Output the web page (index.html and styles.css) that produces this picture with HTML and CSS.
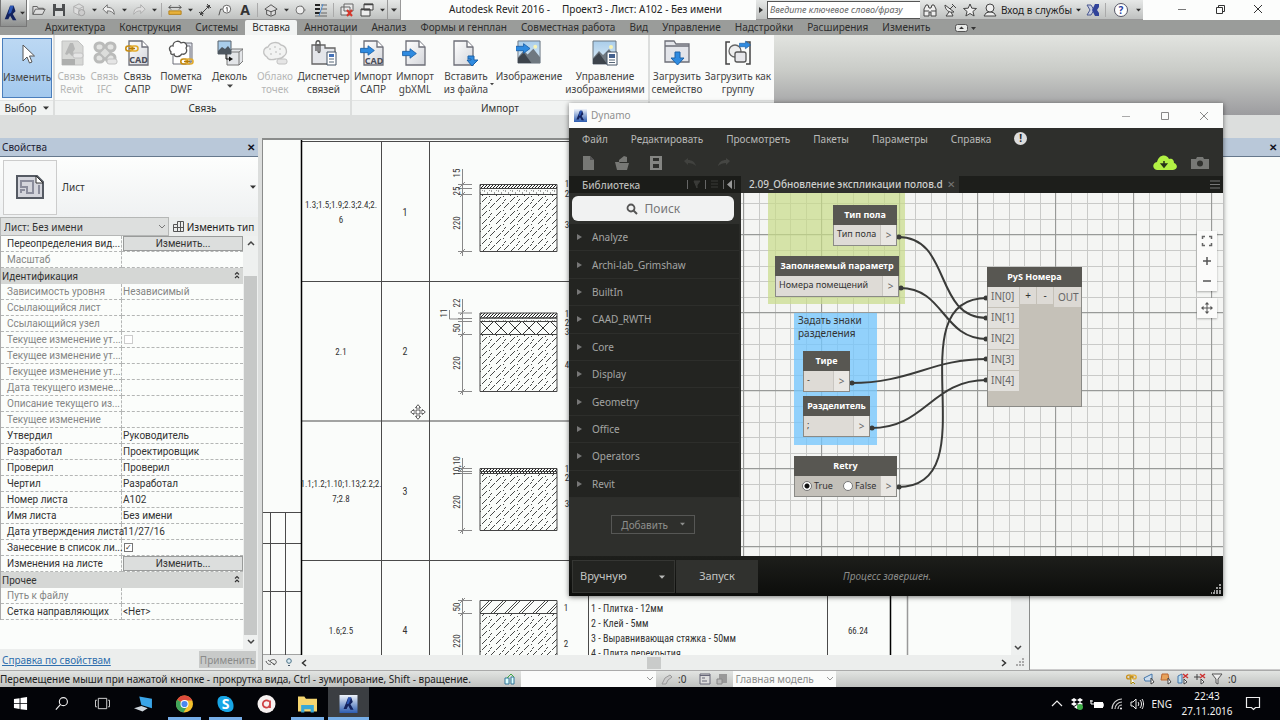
FILE: index.html
```html
<!DOCTYPE html>
<html lang="ru">
<head>
<meta charset="utf-8">
<title>Autodesk Revit 2016 - Проект3 - Лист: A102 - Без имени</title>
<link rel="stylesheet" href="styles.css">
</head>
<body>
<svg class="defs" aria-hidden="true">
  <defs>
    <linearGradient id="pageFill" x1="0" y1="0" x2="1" y2="1"><stop offset="0" stop-color="#fff"/><stop offset="1" stop-color="#d3d5da"/></linearGradient>
    <linearGradient id="skyFill" x1="0" y1="0" x2="0" y2="1"><stop offset="0" stop-color="#a9cdea"/><stop offset="1" stop-color="#dfeef8"/></linearGradient>
    <linearGradient id="revitFill" x1="0" y1="0" x2="0" y2="1"><stop offset="0" stop-color="#eef3fa"/><stop offset="1" stop-color="#2c5cb0"/></linearGradient>
    <symbol id="page" viewBox="0 0 26 26"><path d="M4 1h13l6 6v18H4z" fill="url(#pageFill)" stroke="#6d6f78" stroke-width="1.3"/><path d="M17 1v6h6" fill="#fff" stroke="#6d6f78" stroke-width="1.3"/></symbol>
    <symbol id="chain" viewBox="0 0 14 7"><rect x=".8" y="1" width="7" height="5" rx="2.5" fill="none" stroke="#c98d10" stroke-width="1.6"/><rect x="6" y="1" width="7" height="5" rx="2.5" fill="none" stroke="#e3ab2c" stroke-width="1.6"/><path d="M4 3.5h6" stroke="#b37a08" stroke-width="1.4"/></symbol>
    <symbol id="arrowR" viewBox="0 0 14 10"><path d="M.5 3h7V.6L13.400 5l-5.900 4.400V7h-7z" fill="#2f8be0" stroke="#1c62a8" stroke-width=".8"/></symbol>
    <symbol id="caret" viewBox="0 0 6 4"><path d="M0 .5h6L3 3.700z" fill="currentColor"/></symbol>
    <symbol id="fold" viewBox="0 0 6 8"><path d="M1 3.500l2-2 2 2M1 7l2-2 2 2" fill="none" stroke="#333" stroke-width="1.100"/></symbol>
    <symbol id="move" viewBox="0 0 16 16"><path d="M8 2v12M2 8h12" stroke="currentColor" stroke-width="1.300"/><path d="M8 0l3 3.400H5zM8 16l3-3.400H5zM0 8l3.400-3v6zM16 8l-3.400-3v6z" fill="currentColor"/></symbol>
    <symbol id="aMark" viewBox="0 0 20 20"><path d="M3 17L9 2h4l2 6-3 3 4 7h-4l-3-5-2 4z" fill="#13235f"/><path d="M9 2l4 0-3 8-3 1z" fill="#2c57b5"/></symbol>
    <symbol id="picture" viewBox="0 0 26 26"><path d="M1 1h23v23H1z" fill="url(#skyFill)" stroke="#6b7681"/><path d="M1 18l6-7 4 4 6-6 7 9v6H1z" fill="#6f7880"/><path d="M1 19l6-6 8 11H1z" fill="#3d444c"/><circle cx="19" cy="7" r="2" fill="#f7f4b5"/></symbol>
  </defs>
</svg>

<div class="revit">
  <header class="titlebar">
    <button class="logo" aria-label="Меню приложения"><svg width="18" height="20"><use href="#aMark"/></svg><svg class="caret"><use href="#caret"/></svg></button>
    <div class="qat">
      <button aria-label="Открыть"><svg viewBox="0 0 16 14"><path d="M1 12V3h5l1 2h6v2M1 12l3-6h11l-3 6z" fill="#ddd" stroke="#555"/></svg></button>
      <button aria-label="Сохранить"><svg viewBox="0 0 14 14"><path d="M1 1h12v12H1z" fill="#4c4e50"/><path d="M4 1h6v4H4zM3 8h8v5H3z" fill="#d8dada"/></svg></button>
      <button aria-label="Синхронизация"><svg viewBox="0 0 16 16"><path d="M2 4l6-3 5 3v6l-5 4-6-3zM2 4l6 3 5-3M8 7v7" fill="#ddd" stroke="#aaa"/><circle cx="11" cy="11" r="3.500" fill="#ccc" stroke="#999"/></svg></button>
      <i class="drop"><svg class="caret"><use href="#caret"/></svg></i>
      <button aria-label="Отменить"><svg viewBox="0 0 16 14"><path d="M1 6l5-5v3c5 0 8 2 8 8-2-3-4-4-8-4v3z" fill="#eee" stroke="#666"/></svg></button>
      <i class="drop"><svg class="caret"><use href="#caret"/></svg></i>
      <button aria-label="Повторить"><svg viewBox="0 0 16 14"><path d="M15 6l-5-5v3c-5 0-8 2-8 8 2-3 4-4 8-4v3z" fill="#ddd" stroke="#aaa"/></svg></button>
      <i class="drop"><svg class="caret"><use href="#caret"/></svg></i>
      <i class="sep"></i>
      <button aria-label="Измерить"><svg viewBox="0 0 16 14"><path d="M1 4h14M3.500 1.500L1 4l2.500 2.500M12.500 1.500L15 4l-2.500 2.500" fill="none" stroke="#444"/><path d="M1 8h14v4H1z" fill="#e7b13c" stroke="#b07d14"/></svg></button>
      <i class="drop"><svg class="caret"><use href="#caret"/></svg></i>
      <button aria-label="Размер"><svg viewBox="0 0 14 14"><path d="M2 12L12 2M1 9l4 4M9 1l4 4" stroke="#444"/><path d="M2 12l1-4 3 3zM12 2l-1 4-3-3z" fill="#444"/></svg></button>
      <button aria-label="Марка"><svg viewBox="0 0 16 14"><circle cx="10" cy="6" r="4.500" fill="#fff" stroke="#555"/><path d="M5 6H3L1 13M9 5l1.500-1v5" fill="none" stroke="#444"/></svg></button>
      <button class="letter" aria-label="Текст">A</button>
      <i class="sep"></i>
      <button aria-label="3D вид"><svg viewBox="0 0 16 14"><path d="M1 6l7-5 7 5-2 1v5l-5 2-5-2V7z" fill="#ddd" stroke="#444"/><path d="M3 7l5 2 5-2M8 9v4" fill="none" stroke="#444"/></svg></button>
      <i class="drop"><svg class="caret"><use href="#caret"/></svg></i>
      <button aria-label="Разрез"><svg viewBox="0 0 14 14"><path d="M7 2l5 5-5 5z" fill="#999"/><circle cx="6" cy="7" r="4" fill="#eee" stroke="#777"/></svg></button>
      <button aria-label="Тонкие линии"><svg viewBox="0 0 14 14"><path d="M1 2h5M1 6h5M1 10h5" stroke="#222" stroke-width="2"/><path d="M7 2h6M7 6h6M7 10h6M1 13h12" stroke="#666"/><path d="M9 1L5 13" stroke="#4e8bd0"/></svg></button>
      <i class="sep"></i>
      <button aria-label="Закрыть скрытые"><svg viewBox="0 0 14 14"><path d="M4 1h9v7H4zM1 4h9v8H1z" fill="#e8e8e8" stroke="#666"/><path d="M7 7l5 6M12 7l-5 6" stroke="#d5372c" stroke-width="2"/></svg></button>
      <button aria-label="Переключение окон"><svg viewBox="0 0 14 14"><path d="M4 1h9v6H4zM1 6h9v7H1z" fill="#eee" stroke="#444"/><path d="M4 1.500h9M1 6.500h9" stroke="#444" stroke-width="1.500"/></svg></button>
      <i class="drop"><svg class="caret"><use href="#caret"/></svg></i>
      <i class="more"><svg class="caret"><use href="#caret"/></svg></i>
    </div>
    <h1><span>Autodesk Revit 2016 -</span><span>Проект3 - Лист: A102 - Без имени</span></h1>
    <div class="info">
      <button class="nudge" aria-label="Развернуть"><svg viewBox="0 0 4 6"><path d="M0 0l4 3-4 3z" fill="#333"/></svg></button>
      <input type="text" placeholder="Введите ключевое слово/фразу" aria-label="Поиск по справке">
      <button aria-label="Поиск"><svg viewBox="0 0 14 14"><path d="M1 13V6l2-4h2l1 3h2l1-3h2l2 4v7H8V9H6v4zM1 8h5M8 8h5" fill="#eee" stroke="#444"/></svg></button>
      <button aria-label="Центр связи"><svg viewBox="0 0 14 14"><path d="M2 2c0 5 4 8 9 7zM6 9l-3 4h7L8 9M7 6l4-4M9 1l4 4" fill="#eee" stroke="#444"/></svg></button>
      <button aria-label="Избранное"><svg viewBox="0 0 14 14"><path d="M7 1l1.800 4.200 4.700.3-3.600 3 1.200 4.500L7 10.500 2.900 13l1.200-4.500-3.600-3 4.700-.3z" fill="#eee" stroke="#444"/></svg></button>
      <button class="signin"><svg viewBox="0 0 14 14"><path d="M1 13h12l-2-3-3-1h-2l-3 1z" fill="#eee" stroke="#444"/><circle cx="7" cy="5" r="4" fill="#eee" stroke="#444"/></svg>Вход в службы<svg class="caret"><use href="#caret"/></svg></button>
      <button aria-label="Exchange Apps"><svg viewBox="0 0 14 14"><path d="M1 2h4l3 5-3 5H1l3-5z" fill="#c5cbe0" stroke="#4a5890"/><path d="M13 1v3l-2 3 2 3v3H9L6 7l3-6z" fill="#31439a"/></svg></button>
      <i class="sep"></i>
      <button class="help" aria-label="Справка">?</button>
      <i class="drop"><svg class="caret"><use href="#caret"/></svg></i>
    </div>
    <div class="winbtns">
      <button aria-label="Свернуть"><svg viewBox="0 0 10 10"><path d="M1 5.500h8" stroke="#777"/></svg></button>
      <button aria-label="Восстановить"><svg viewBox="0 0 10 10"><path d="M1.500 3.500h6v6h-6zM3.500 3V1.500h6v6H8" fill="none" stroke="#333"/></svg></button>
      <button aria-label="Закрыть"><svg viewBox="0 0 10 10"><path d="M1 1l8 8M9 1L1 9" stroke="#333"/></svg></button>
    </div>
  </header>

  <nav class="tabs">
    <button>Архитектура</button><button>Конструкция</button><button>Системы</button><button class="on">Вставка</button><button>Аннотации</button><button>Анализ</button><button>Формы и генплан</button><button>Совместная работа</button><button>Вид</button><button>Управление</button><button>Надстройки</button><button>Расширения</button><button>Изменить</button>
    <button class="collapse" aria-label="Свернуть ленту"><svg width="22" height="8" viewBox="0 0 22 8"><rect x=".5" y=".5" width="12" height="7" rx="2" fill="#e8eae8" stroke="#555"/><path d="M4 5h5L6.500 2.500zM16 3h5l-2.500 3z" fill="#333"/></svg></button>
  </nav>

  <div class="ribbon">
    <section class="group g-select">
      <div class="tools">
        <button class="tool active"><svg viewBox="0 0 26 26"><path d="M9 4v16l4-4 2.500 6 2.500-1-2.500-6h5z" fill="#fff" stroke="#555"/></svg><span>Изменить</span></button>
      </div>
      <h2>Выбор <svg class="caret"><use href="#caret"/></svg></h2>
    </section>
    <section class="group g-link">
      <div class="tools">
        <button class="tool off"><svg viewBox="0 0 26 26"><path d="M3 1h16l5 5v19H3z" fill="#c9cac8" stroke="#aaa"/><path d="M6 14l5-11h3l2 6-2 3 3 4h-4l-3-3-2 2z" fill="#999"/><path d="M3 19h13v6H3z" fill="#8f908e"/><rect x="14" y="13" width="10" height="5" rx="2" fill="#ddd" stroke="#aaa"/></svg><span>Связь<br>Revit</span></button>
        <button class="tool off"><svg viewBox="0 0 26 26"><g fill="#d8d9d7" stroke="#a0a19f" stroke-width="3"><rect x="3" y="3" width="9" height="8" rx="4"/><rect x="14" y="3" width="9" height="8" rx="4"/><rect x="3" y="14" width="9" height="8" rx="4"/><rect x="14" y="14" width="9" height="8" rx="4"/></g><path d="M13 7l6 6-6 6-6-6z" fill="#d0d1cf" stroke="#a0a19f" stroke-width="2"/><rect x="15" y="19" width="10" height="5" rx="2" fill="#ddd" stroke="#aaa"/></svg><span>Связь<br>IFC</span></button>
        <button class="tool"><svg viewBox="0 0 26 26"><use href="#page" width="26" height="26"/><use href="#chain" x="0" y="5" width="14" height="7"/><text class="cad" x="13.500" y="23">CAD</text></svg><span>Связь<br>САПР</span></button>
        <button class="tool"><svg viewBox="0 0 26 26"><path d="M7 3h17v19H7z" fill="#dfe2ea" stroke="#6d6f78"/><path d="M5 6h17v18H5z" fill="#fff" stroke="#6d6f78"/><path d="M3 12c-3-3-1-7 2-6 0-5 6-6 8-3 4-2 7 2 5 5 2 4-1 7-4 6-3 4-8 3-8 0-2 1-4 0-3-2z" fill="#fff" stroke="#555" stroke-width="1.300"/><use href="#chain" x="12" y="18" width="14" height="7"/></svg><span>Пометка<br>DWF</span></button>
        <button class="tool"><svg viewBox="0 0 26 26"><path d="M10 12l5-3h11v12l-4 4H10z" fill="#e3e5e8" stroke="#777"/><path d="M10 12h12l4-3M22 12v13" fill="none" stroke="#777"/><path d="M1 1h13v13H1z" fill="#a9cdea" stroke="#57616b"/><path d="M1 11l4-4 3 2 3-3 3 4v4H1z" fill="#4d565f"/><path d="M9 14v5h4" fill="none" stroke="#111"/><path d="M12 16.500l4 2.500-4 2.500z" fill="#111"/></svg><span>Деколь</span><svg class="caret"><use href="#caret"/></svg></button>
        <button class="tool off"><svg viewBox="0 0 26 26"><path d="M5 17c-5-3-4-9 1-10 2-5 10-6 13-2 6 1 7 8 3 11-3 4-6 2-8 3-4 1-8 1-9-2z" fill="#f0f0ef" stroke="#aaa" stroke-width="1.300"/><g fill="#bbb"><circle cx="8" cy="9" r="1"/><circle cx="13" cy="7" r="1"/><circle cx="18" cy="9" r="1"/><circle cx="9" cy="14" r="1"/><circle cx="14" cy="12" r="1"/><circle cx="18" cy="14" r="1"/></g><rect x="15" y="19" width="10" height="5" rx="2" fill="#ddd" stroke="#aaa"/></svg><span>Облако<br>точек</span></button>
        <button class="tool"><svg viewBox="0 0 26 26"><path d="M1 5h13v3h10v16H1z" fill="#e4e6ea" stroke="#666" stroke-width="1.300"/><path d="M5 11V3c0-3 4-3 4 0v8c0 2-2 2-2 0V4" fill="none" stroke="#555" stroke-width="1.300"/><path d="M16 12h9v13h-9z" fill="#fff" stroke="#456"/><path d="M18 14h5v3h-5z" fill="#4472b8"/><path d="M18 19h5M18 22h5" stroke="#567"/></svg><span>Диспетчер<br>связей</span></button>
      </div>
      <h2>Связь</h2>
    </section>
    <section class="group g-import">
      <div class="tools">
        <button class="tool"><svg viewBox="0 0 26 26"><use href="#page" width="26" height="26"/><use href="#arrowR" x="0" y="5" width="15" height="11"/><text class="cad" x="14" y="24">CAD</text></svg><span>Импорт<br>САПР</span></button>
        <button class="tool"><svg viewBox="0 0 26 26"><use href="#page" width="26" height="26"/><use href="#arrowR" x="0" y="8" width="15" height="11"/></svg><span>Импорт<br>gbXML</span></button>
        <button class="tool"><svg viewBox="0 0 26 26"><use href="#page" x="-3" width="26" height="26"/><path d="M15 16h6v4h4l-6 6-5-6h4v-1h-3z" fill="#2f8be0" stroke="#1c62a8"/></svg><span>Вставить<br>из файла</span><svg class="caret side"><use href="#caret"/></svg></button>
        <button class="tool"><svg viewBox="0 0 26 26"><use href="#picture" x="1" width="25" height="25"/><use href="#arrowR" x="-1" y="3" width="16" height="11"/></svg><span>Изображение</span></button>
        <button class="tool"><svg viewBox="0 0 26 26"><use href="#picture" width="26" height="26"/><path d="M15 12h10v13H15z" fill="#fff" stroke="#456"/><path d="M17 14h6v4h-6z" fill="#44618e"/><path d="M17 20h6M17 22.500h6" stroke="#567"/></svg><span>Управление<br>изображениями</span></button>
      </div>
      <h2>Импорт</h2>
    </section>
    <section class="group g-load">
      <div class="tools">
        <button class="tool"><svg viewBox="0 0 26 26"><path d="M1 4V1h9l2 3h13v18H1zM1 6h24" fill="#e3e5ea" stroke="#6d6f78" stroke-width="1.300"/><path d="M11 12h5v6h4l-6.500 7L7 18h4z" fill="#2f8be0" stroke="#1c62a8"/></svg><span>Загрузить<br>семейство</span></button>
        <button class="tool"><svg viewBox="0 0 26 26"><path d="M5 2H1v22h4M21 2h4v22h-4" fill="none" stroke="#444" stroke-width="1.500"/><circle cx="10" cy="11" r="6" fill="#eee" stroke="#666" stroke-width="1.300"/><rect x="10" y="12" width="11" height="10" rx="2" fill="#e6e6ea" stroke="#555" stroke-width="1.300"/><use href="#arrowR" x="14" y="0" width="12" height="10"/></svg><span>Загрузить как<br>группу</span></button>
      </div>
      <h2></h2>
    </section>
  </div>
  <div class="options"></div>

  <main class="workspace">
    <aside class="props">
      <header><h3>Свойства</h3><button aria-label="Закрыть">✕</button></header>
      <div class="type">
        <div class="thumb"><svg width="28" height="24" viewBox="0 0 28 24"><path d="M1 1h20l6 6v16H1z" fill="#d4d5dc" stroke="#555a63" stroke-width="2"/><path d="M5 6h12v12h-6v-6H5zM5 18v-3h4M23 10v9" fill="none" stroke="#8b8d9c" stroke-width="2"/><path d="M20 1v7h7z" fill="#fff" stroke="#333"/></svg></div>
        <span>Лист</span>
        <svg class="caret"><use href="#caret"/></svg>
      </div>
      <div class="filter">
        <select aria-label="Категория"><option>Лист: Без имени</option></select>
        <button><svg width="11" height="11" viewBox="0 0 11 11"><path d="M.5 3.500h4v-3h6v10h-10zM.5 6.500h10M4.500 3.500v7M7.500.5v10" fill="none" stroke="#555"/></svg>Изменить тип</button>
      </div>
      <div class="grid">
        <div class="rows">
        <table>
          <tbody>
            <tr><th>Переопределения вид...</th><td class="b"><button>Изменить...</button></td></tr>
            <tr class="dim"><th>Масштаб</th><td></td></tr>
            <tr class="head"><th colspan="2">Идентификация<svg><use href="#fold"/></svg></th></tr>
            <tr class="dim"><th>Зависимость уровня</th><td>Независимый</td></tr>
            <tr class="dim"><th>Ссылающийся лист</th><td></td></tr>
            <tr class="dim"><th>Ссылающийся узел</th><td></td></tr>
            <tr class="dim"><th>Текущее изменение ут...</th><td><input type="checkbox" disabled aria-label="Текущее изменение"></td></tr>
            <tr class="dim"><th>Текущее изменение ут...</th><td></td></tr>
            <tr class="dim"><th>Текущее изменение ут...</th><td></td></tr>
            <tr class="dim"><th>Дата текущего измене...</th><td></td></tr>
            <tr class="dim"><th>Описание текущего из...</th><td></td></tr>
            <tr class="dim"><th>Текущее изменение</th><td></td></tr>
            <tr><th>Утвердил</th><td>Руководитель</td></tr>
            <tr><th>Разработал</th><td>Проектировщик</td></tr>
            <tr><th>Проверил</th><td>Проверил</td></tr>
            <tr><th>Чертил</th><td>Разработал</td></tr>
            <tr><th>Номер листа</th><td>A102</td></tr>
            <tr><th>Имя листа</th><td>Без имени</td></tr>
            <tr><th>Дата утверждения листа</th><td>11/27/16</td></tr>
            <tr><th>Занесение в список ли...</th><td><input type="checkbox" checked aria-label="Занесение в список листов"></td></tr>
            <tr><th>Изменения на листе</th><td class="b"><button>Изменить...</button></td></tr>
            <tr class="head"><th colspan="2">Прочее<svg><use href="#fold"/></svg></th></tr>
            <tr class="dim"><th>Путь к файлу</th><td></td></tr>
            <tr><th>Сетка направляющих</th><td>&lt;Нет&gt;</td></tr>
          </tbody>
        </table>
        </div>
        <div class="vbar"><svg viewBox="0 0 8 6"><path d="M1 5l3-3 3 3" fill="none" stroke="#444" stroke-width="1.500"/></svg><i></i><svg viewBox="0 0 8 6"><path d="M1 1l3 3 3-3" fill="none" stroke="#444" stroke-width="1.500"/></svg></div>
      </div>
      <footer><a href="#">Справка по свойствам</a><button disabled>Применить</button></footer>
    </aside>

    <section class="view">
      <div class="sheetrow">
        <svg class="sheet" aria-label="Экспликация полов">
          <defs>
            <pattern id="hatch" width="14" height="14" patternUnits="userSpaceOnUse"><path d="M0 12l5-5M6 6l5-5M6 14l5-5M12 8l3-3M-1 6l3-3M13 1l2-2" stroke="#333" stroke-width=".9"/></pattern>
            <pattern id="dense" width="3" height="3" patternUnits="userSpaceOnUse"><path d="M0 3l3-3" stroke="#222" stroke-width="1"/></pattern>
            <pattern id="cross" width="14" height="14" patternUnits="userSpaceOnUse" patternTransform="translate(480 321)"><path d="M0 14L14 0M0 0l14 14" stroke="#333" stroke-width="1"/></pattern>
            <pattern id="wide" width="14" height="13" patternUnits="userSpaceOnUse" patternTransform="translate(480 600)"><path d="M0 13L13 0M-3 13L10 0M11 13L24 0" stroke="#333" stroke-width=".9"/></pattern>
            <pattern id="dots" width="7" height="5" patternUnits="userSpaceOnUse"><path d="M1 1h1M4 3h1M6 0h1" stroke="#444"/></pattern>
          </defs>
          <g transform="translate(-263 -140)">
            <g class="thin">
              <path d="M302 141.500H1000M302 281.500H900M302 421H900M302 560.500H900M381.500 141V660M429.500 141V660M588.500 560V660M827.500 590V660"/>
              <path d="M263 512.500h38M263 543.500h38M263 591.500h38M263 655h38M270.500 512v150M285.500 512v150"/>
            </g>
            <path class="thick" d="M301.500 139v520M890.500 139v520"/><path class="gray" d="M907.500 139v520"/>
            <g class="box">
              <path fill="url(#dense)" d="M480 184.500h77v4h-77z"/><path fill="url(#dots)" d="M480 188.500h77v6h-77z"/><path fill="url(#hatch)" d="M480 194.500h77v57h-77z"/>
              <path fill="url(#dense)" d="M480 313h77v5h-77z"/><path fill="url(#dots)" d="M480 318h77v3.500h-77z"/><path fill="url(#cross)" d="M480 321.500h77v13h-77z"/><path fill="url(#hatch)" d="M480 334.500h77v57h-77z"/>
              <path fill="url(#dense)" d="M480 468.500h77v3h-77z"/><path fill="url(#dense)" d="M480 471.500h77v2h-77z"/><path fill="url(#hatch)" d="M480 473.500h77v57h-77z"/>
              <path fill="url(#wide)" d="M480 600.500h77v13h-77z"/><path fill="url(#hatch)" d="M480 613.500h77v57h-77z"/>
            </g>
            <g class="dimline">
              <path d="M462.500 169v87M458 184.500h14M458 188.500h14M458 194.500h14M458 251.500h14M460 187l5-5M460 197l5-5M460 254l5-5"/>
              <path d="M462.500 299v96M458 313h14M458 318.500h14M458 321.500h14M458 334.500h14M458 391.500h14M449.500 310v9h13M460 315l5-5M460 337l5-5M460 394l5-5"/>
              <path d="M462.500 458v76M458 468.500h14M458 471.500h14M458 473.500h14M458 530.500h14M460 471l5-5M460 533l5-5"/>
              <path d="M462.500 598v70M458 600.500h14M458 613.500h14M460 603l5-5M460 616l5-5"/>
            </g>
            <g class="num">
              <text transform="translate(460 173) rotate(-90)">15</text><text transform="translate(460 191) rotate(-90)">25</text><text transform="translate(460 223) rotate(-90)">220</text>
              <text transform="translate(460 303) rotate(-90)">22</text><text transform="translate(447 313) rotate(-90)">11</text><text transform="translate(460 328) rotate(-90)">50</text><text transform="translate(460 363) rotate(-90)">220</text>
              <text transform="translate(460 466) rotate(-90)">10,10</text><text transform="translate(460 502) rotate(-90)">220</text>
              <text transform="translate(460 607) rotate(-90)">50</text><text transform="translate(460 641) rotate(-90)">220</text>
              <text x="567" y="187">1</text><text x="567" y="197">2</text><text x="567" y="228">3</text>
              <text x="567" y="317">1</text><text x="567" y="326">2</text><text x="567" y="335">3</text><text x="567" y="368">4</text>
              <text x="567" y="472">1</text><text x="567" y="481">2</text><text x="567" y="507">3</text>
              <text x="566" y="611">1</text><text x="566" y="647">2</text>
            </g>
            <g class="cell">
              <text x="341" y="208">1.3;1.5;1.9;2.3;2.4;2.</text><text x="341" y="223">6</text>
              <text x="341" y="355">2.1</text>
              <text x="341" y="487">1.1;1.2;1.10;1.13;2.2;2.</text><text x="341" y="502">7;2.8</text>
              <text x="341" y="634">1.6;2.5</text>
              <text x="858" y="634">66.24</text>
            </g>
            <g class="cell big"><text x="405" y="216">1</text><text x="405" y="355">2</text><text x="405" y="495">3</text><text x="405" y="634">4</text></g>
            <g class="desc">
              <text x="591" y="612">1 - Плитка - 12мм</text><text x="591" y="627">2 - Клей - 5мм</text><text x="591" y="642">3 - Выравнивающая стяжка - 50мм</text><text x="591" y="657">4 - Плита перекрытия</text>
            </g>
            <svg x="410" y="404" width="16" height="16" viewBox="0 0 16 16"><path d="M8 .7l2.500 3H9v3.300h3.300V5.500l3 2.500-3 2.500V9H9v3.300h1.500L8 15.300l-2.500-3H7V9H3.700v1.500L.7 8l3-2.500V7H7V3.700H5.500z" fill="#fff" stroke="#333" stroke-width=".8"/></svg>
          </g>
        </svg>
        <div class="sheetbar"><svg viewBox="0 0 8 6"><path d="M1 1l3 3 3-3" fill="none" stroke="#444" stroke-width="1.500"/></svg></div>
      </div>
      <div class="hbar">
        <svg width="12" height="9" viewBox="0 0 12 9"><path d="M1 3c1 3 3 4 5 3M3 2l7 5M5 3c2-2 5-2 6 0s-1 4-3 3" fill="none" stroke="#555"/></svg>
        <svg width="6" height="9" viewBox="0 0 6 9"><circle cx="3" cy="3" r="2.300" fill="#dcecf5" stroke="#4b7286"/><path d="M2 7.500h2" stroke="#456"/></svg>
        <svg width="6" height="8" viewBox="0 0 6 8"><path d="M5 1L1.500 4 5 7" fill="none" stroke="#333" stroke-width="1.500"/></svg>
        <div class="track"><i></i></div>
        <svg width="6" height="8" viewBox="0 0 6 8"><path d="M1 1l3.500 3L1 7" fill="none" stroke="#333" stroke-width="1.500"/></svg>
        <svg width="9" height="9" viewBox="0 0 9 9"><path d="M6 1h2M3 4h2M6 4h2M0 7h2M3 7h2M6 7h2" stroke="#aaa" stroke-width="2"/></svg>
      </div>
    </section>
    <aside class="browser"><header><button aria-label="Закрыть">✕</button></header></aside>
  </main>

  <footer class="status">
    <p>Перемещение мыши при нажатой кнопке - прокрутка вида, Ctrl - зумирование, Shift - вращение.</p>
    <div class="sets">
      <svg width="12" height="12" viewBox="0 0 12 12"><path d="M1 5h4v6H1zM7 4h3v7H7z" fill="#dff" stroke="#379"/><path d="M3 5l4-4 3 3" fill="none" stroke="#4a4"/></svg>
      <select aria-label="Рабочий набор"><option></option></select>
      <svg width="12" height="12" viewBox="0 0 12 12"><path d="M1 11l3-6 5-3 2 2-4 3-2 4z" fill="#ccc" stroke="#999"/></svg>
      <span>:0</span>
      <svg width="12" height="12" viewBox="0 0 12 12"><path d="M1 1h10v10H1z" fill="#ddd" stroke="#667"/><path d="M1 2.500h10M3 5h3M3 8h5" stroke="#667"/></svg>
      <svg width="12" height="12" viewBox="0 0 12 12"><path d="M3 1h8v9H3z" fill="#999"/><path d="M1 11V6h5v5z" fill="#bbb" stroke="#888"/></svg>
      <select class="model" aria-label="Вариант конструкции"><option>Главная модель</option></select>
    </div>
    <div class="picks">
      <svg viewBox="0 0 12 12"><use href="#chain" y="1" width="11" height="6"/><path d="M5 4v7l2-2 2 2" fill="#fff" stroke="#a80"/></svg>
      <svg viewBox="0 0 12 12"><path d="M1 5l8-4v7H2z" fill="#cde" stroke="#47a"/><path d="M8 5v6l3-2z" fill="#fff" stroke="#444"/></svg>
      <svg viewBox="0 0 12 12"><path d="M2 1h6l1 6H1z" fill="#e7a35c" stroke="#b63"/><path d="M8 5v6l3-2z" fill="#fff" stroke="#444"/></svg>
      <svg viewBox="0 0 12 12"><path d="M1 3l4-2v9H1z" fill="#bde" stroke="#47a"/><path d="M6 1l5 4M11 1L6 5" stroke="#c33" stroke-width="1.500"/><path d="M7 6v5l3-2z" fill="#fff" stroke="#444"/></svg>
      <svg viewBox="0 0 12 12"><path d="M0 4h6M3 1v6" stroke="#444"/><path d="M6 1l5 4M11 1L6 5" stroke="#c33" stroke-width="1.500"/><path d="M7 6v5l3-2z" fill="#fff" stroke="#444"/></svg>
      <svg viewBox="0 0 12 12"><path d="M1 1h10L7 6v5L5 10V6z" fill="#eee" stroke="#555"/></svg>
      <span>:0</span>
    </div>
  </footer>
</div>

<nav class="taskbar">
  <button aria-label="Пуск"><svg viewBox="0 0 16 16"><path d="M1 3.200l6-.9v5.300H1zM8 2.100l7-1.100v6.600H8zM1 8.500h6v5.300l-6-.9zM8 8.500h7V15l-7-1z" fill="#fff"/></svg></button>
  <button aria-label="Поиск"><svg viewBox="0 0 16 16"><circle cx="10" cy="6" r="4.300" fill="none" stroke="#eee" stroke-width="1.200"/><path d="M7 9l-5 5.500" stroke="#eee" stroke-width="1.200"/></svg></button>
  <button aria-label="Представление задач"><svg viewBox="0 0 16 16"><path d="M3.500 2.500h9v11h-9zM2 4.500H.5v7H2M14 4.500h1.500v7H14" fill="none" stroke="#ddd"/></svg></button>
  <button aria-label="Компьютер"><svg class="wide" viewBox="0 0 18 16"><path d="M5 1l12 2v9L7 9z" fill="#3aa5e8"/><path d="M0 12l7-2 6 2-5 3-3-1z" fill="#cfd6dc"/></svg></button>
  <button class="open" aria-label="Chrome"><svg class="wide" viewBox="0 0 18 18"><circle cx="9" cy="9" r="8.500" fill="#f3c02c"/><path d="M9 9L1.600 4.800A8.500 8.500 0 0 1 16.800 5.500H9z" fill="#dd4b3c"/><path d="M9 9L1.600 4.800A8.500 8.500 0 0 0 8 17.500l3.500-6z" fill="#3fa45a"/><circle cx="9" cy="9" r="4" fill="#fff"/><circle cx="9" cy="9" r="3.100" fill="#4a87ee"/></svg></button>
  <button class="open" aria-label="Skype"><svg class="wide" viewBox="0 0 18 18"><rect x="1" y="1" width="12" height="12" rx="5" fill="#18a6e6"/><rect x="5" y="5" width="12" height="12" rx="5" fill="#18a6e6"/><circle cx="9" cy="9" r="7.500" fill="#18a6e6"/><text x="9" y="14" text-anchor="middle" fill="#fff" font-size="14" font-weight="700">S</text></svg></button>
  <button aria-label="Запись"><svg class="wide" viewBox="0 0 18 18"><circle cx="9" cy="9" r="9" fill="#f6f1f0"/><path d="M12.500 5.500v7.500M12.500 9a3.600 3.600 0 1 1-1-2.500" fill="none" stroke="#cf4244" stroke-width="1.800"/></svg></button>
  <button class="open" aria-label="Проводник"><svg class="wide" viewBox="0 0 18 16"><path d="M0 1h6l1.500 2H18v12H0z" fill="#f5d56f"/><path d="M3 9h12v7h-3v-3H6v3H3z" fill="#38a8d8"/></svg></button>
  <button class="open current" aria-label="Revit"><svg class="wide" viewBox="0 0 20 20"><path d="M0 0h20v20H0z" fill="url(#revitFill)"/><use href="#aMark" x="2" y="1" width="17" height="17"/></svg></button>
  <div class="tray">
    <svg viewBox="0 0 14 14"><path d="M2 9l5-5 5 5" fill="none" stroke="#eee" stroke-width="1.200"/></svg>
    <svg viewBox="0 0 14 14"><path d="M4 1l3 2-3 2-3-2zM10 1l3 2-3 2-3-2zM4 5l3 2-3 2-3-2zM10 5l3 2-3 2-3-2zM7 8l3 2-3 2-3-2z" fill="#fff"/><circle cx="10" cy="10" r="3" fill="#3fae49"/></svg>
    <svg viewBox="0 0 14 14"><path d="M4 5h9v6H4z" fill="#fff"/><path d="M1 3v4h3M0 4h3M13 7h1v2h-1" fill="none" stroke="#fff"/></svg>
    <svg viewBox="0 0 14 14"><path d="M2 12A10 10 0 0 1 12 2M5 12a7 7 0 0 1 7-7M8 12a4 4 0 0 1 4-4" fill="none" stroke="#ccc" stroke-width="1.200"/><circle cx="11" cy="11.500" r="1" fill="#fff"/></svg>
    <svg viewBox="0 0 14 14"><path d="M1 5h2l3-3v10L3 9H1z" fill="none" stroke="#eee"/><path d="M8 5c1 1 1 3 0 4M10 3c2 2 2 6 0 8M12 2c2 3 2 7 0 10" fill="none" stroke="#eee"/></svg>
    <span class="lang">ENG</span>
    <time>22:43<br>27.11.2016</time>
    <svg class="bell" viewBox="0 0 16 16"><path d="M1.500 1.500h13v10h-4l-2 2-2-2h-5z" fill="none" stroke="#eee" stroke-width="1.200"/></svg>
  </div>
</nav>

<div class="dynamo" role="dialog" aria-label="Dynamo">
  <header class="d-title">
    <svg width="13" height="13" viewBox="0 0 20 20"><path d="M0 0h20v20H0z" fill="url(#revitFill)"/><use href="#aMark" x="1" y="1" width="18" height="18"/></svg>
    <span>Dynamo</span>
    <button aria-label="Свернуть"><svg viewBox="0 0 10 10"><path d="M1 5.500h8" stroke="#aaa"/></svg></button>
    <button aria-label="Развернуть"><svg viewBox="0 0 10 10"><path d="M1.500 1.500h7v7h-7z" fill="none" stroke="#888"/></svg></button>
    <button aria-label="Закрыть"><svg viewBox="0 0 10 10"><path d="M1 1l8 8M9 1L1 9" stroke="#888"/></svg></button>
  </header>
  <nav class="d-menu"><button>Файл</button><button>Редактировать</button><button>Просмотреть</button><button>Пакеты</button><button>Параметры</button><button>Справка</button><button class="alert" aria-label="Уведомления">!</button></nav>
  <div class="d-tools">
    <button aria-label="Новый"><svg viewBox="0 0 14 14"><path d="M2 0h7l4 4v10H2z" fill="#777875"/><path d="M9 0v4h4" fill="#555"/></svg></button>
    <button aria-label="Открыть"><svg viewBox="0 0 14 14"><path d="M4 4l5-4 3 1v5H4z" fill="#777875"/><path d="M0 6h4l1 1h9l-2 7H2z" fill="#777875"/></svg></button>
    <button aria-label="Сохранить"><svg viewBox="0 0 14 14"><path d="M1 0h12v14H1z" fill="#848582"/><path d="M4 2h6v3H4zM4 8h6v4H4z" fill="#2e2f2c"/></svg></button>
    <button aria-label="Отменить"><svg viewBox="0 0 14 14"><path d="M1 5l4-3v2c4 0 7 2 8 6-2-2-5-3-8-3v2z" fill="#41423f"/></svg></button>
    <button aria-label="Повторить"><svg viewBox="0 0 14 14"><path d="M13 5L9 2v2c-4 0-7 2-8 6 2-2 5-3 8-3v2z" fill="#454643"/></svg></button>
    <button class="cloud" aria-label="Обновление"><svg viewBox="0 0 24 16"><path d="M4 15c-5-1-5-7 0-8C6-1 14-1 16 4c4-1 5 2 5 4 4 1 4 7-1 7z" fill="#b2f144"/><path d="M11 6v5M8.500 9l2.500 3 2.500-3z" stroke="#27331a" stroke-width="1.500"/></svg></button>
    <button class="shot" aria-label="Снимок"><svg viewBox="0 0 18 14"><path d="M0 3h5l1-2h6l1 2h5v10H0z" fill="#777875"/><circle cx="9" cy="7.500" r="3" fill="#30312e"/></svg></button>
  </div>
  <div class="d-body">
    <aside class="lib">
      <header><h4>Библиотека</h4><svg width="50" height="9" viewBox="0 0 50 9"><path d="M1.500 0v9M19.500 0v9M37.500 0v9M48.500 0v9" stroke="#666"/><path d="M8 1h6l-3 4v3zM25 1h7M25 4h7M25 7h7" stroke="#3a3b38" fill="#3a3b38"/><path d="M46 0v9l-5-4.500z" fill="#999"/></svg></header>
      <label class="search"><svg width="12" height="12" viewBox="0 0 12 12"><circle cx="5" cy="5" r="3.500" fill="none" stroke="#555" stroke-width="1.800"/><path d="M7.500 7.500L11 11" stroke="#555" stroke-width="2"/></svg><input type="text" placeholder="Поиск" aria-label="Поиск в библиотеке"></label>
      <div class="cats">
        <button>Analyze</button><button>Archi-lab_Grimshaw</button><button>BuiltIn</button><button>CAAD_RWTH</button><button>Core</button><button>Display</button><button>Geometry</button><button>Office</button><button>Operators</button><button>Revit</button>
      </div>
      <div class="add"><button>Добавить <svg class="caret"><use href="#caret"/></svg></button></div>
    </aside>
    <section class="work">
      <header><span class="file">2.09_Обновление экспликации полов.d</span><button aria-label="Закрыть вкладку">✕</button><i></i><svg width="10" height="9" viewBox="0 0 10 9"><path d="M0 1h10M0 4.500h10M0 8h10" stroke="#777" stroke-width="1.200"/></svg></header>
      <div class="canvas">
        <svg class="layer">
          <defs><pattern id="grid" width="78" height="78" patternUnits="userSpaceOnUse" patternTransform="translate(2 41)"><path d="M16 0v78M32 0v78M47 0v78M63 0v78M0 16h78M0 32h78M0 47h78M0 63h78" stroke="#c9cac8" stroke-width="1" transform="translate(.5 .5)"/><path d="M.5 0v78M0 .5h78" stroke="#989a98" stroke-width="1.300"/></pattern></defs>
          <rect width="100%" height="100%" fill="url(#grid)"/>
        </svg>
        <div class="note green"></div>
        <div class="note blue">Задать знаки<br>разделения</div>
        <svg class="layer wires">
          <path d="M157 44C211 44 192 125 246 125M159 95C204 95 201 146 246 146M110 190C170 190 190 166 246 166M130 235C185 235 190 187 246 187M157 294C251 294 152 105 246 105"/>
          <g><circle cx="158" cy="44" r="2.500"/><circle cx="160" cy="95" r="2.500"/><circle cx="111" cy="190" r="2.500"/><circle cx="131" cy="235" r="2.500"/><circle cx="158" cy="294" r="2.500"/><circle cx="245" cy="105" r="2.500"/><circle cx="245" cy="125" r="2.500"/><circle cx="245" cy="146" r="2.500"/><circle cx="245" cy="166" r="2.500"/><circle cx="245" cy="187" r="2.500"/></g>
        </svg>
        <article class="node n-type"><h5>Тип пола</h5><div><span>Тип пола</span><b>&gt;</b></div></article>
        <article class="node n-param"><h5>Заполняемый параметр</h5><div><span>Номера помещений</span><b>&gt;</b></div></article>
        <article class="node n-dash"><h5>Тире</h5><div><span>-</span><b>&gt;</b></div></article>
        <article class="node n-sep"><h5>Разделитель</h5><div><span>;</span><b>&gt;</b></div></article>
        <article class="node n-retry"><h5>Retry</h5><div><span class="radios"><label><input type="radio" name="retry" checked>True</label><label><input type="radio" name="retry">False</label></span><b>&gt;</b></div></article>
        <article class="node n-py"><h5>PyS Номера</h5><div><ul><li>IN[0]</li><li>IN[1]</li><li>IN[2]</li><li>IN[3]</li><li>IN[4]</li></ul><button>+</button><button>-</button><span class="out">OUT</span></div></article>
        <div class="zoomer">
          <div><button aria-label="Вписать"><svg viewBox="0 0 12 12"><path d="M1.500 4V1.500H4M8 1.500h2.500V4M10.500 8v2.500H8M4 10.500H1.500V8" fill="none" stroke="#666" stroke-width="1.500"/></svg></button><button aria-label="Увеличить"><svg viewBox="0 0 12 12"><path d="M2 6h8M6 2v8" stroke="#555" stroke-width="1.500"/></svg></button><button aria-label="Уменьшить"><svg viewBox="0 0 12 12"><path d="M2 6h8" stroke="#555" stroke-width="1.500"/></svg></button></div>
          <div><button aria-label="Панорама"><svg viewBox="0 0 16 16"><use href="#move"/></svg></button></div>
        </div>
      </div>
    </section>
  </div>
  <footer class="d-foot">
    <div class="mode"><select aria-label="Режим запуска"><option>Вручную</option></select><svg class="caret"><use href="#caret"/></svg></div>
    <button>Запуск</button>
    <p>Процесс завершен.</p>
    <svg width="10" height="10" viewBox="0 0 10 10"><path d="M8 1h2M5 4h2M8 4h2M3 7h1M5 7h2M8 7h2M0 9h1M2 9h2M5 9h2M8 9h2" stroke="#ccc" stroke-width="1.500"/></svg>
  </footer>
</div>
</body>
</html>
```

FILE: styles.css
```css
* { box-sizing: border-box; }
body {
  margin: 0;
  height: 100vh;
  display: flex;
  flex-direction: column;
  overflow: hidden;
  position: relative;
  font: 10px/16px "Noto Sans", "Open Sans", sans-serif;
  color: #333;
  background: #dcdedd;
}
h1, h2, h3, h4, h5, p, ul { margin: 0; padding: 0; font: inherit; list-style: none; }
button, input, select { font: inherit; color: inherit; }
button { border: 0; padding: 0; background: none; white-space: nowrap; }
select { appearance: none; border-radius: 0; }
svg { flex: none; }
.defs { position: absolute; width: 0; height: 0; }
.caret { width: 6px; height: 4px; }

.revit { flex: 1; min-height: 0; display: flex; flex-direction: column; }

/* title bar */
.titlebar { height: 20px; flex: none; display: flex; align-items: stretch; background: #fcfdfc; }
.logo {
  width: 27px; height: 27px; margin-right: 2px; flex: none; z-index: 1;
  display: flex; align-items: center; justify-content: center;
  background: linear-gradient(#dcdedd, #8d8f8e); border: 1px solid #777; border-top: 0;
}
.logo .caret { width: 5px; }
.qat, .info { display: flex; align-items: center; background: linear-gradient(#e6e8e7, #bfc1c0); border-bottom: 1px solid #999; }
.qat button, .info button { width: 20px; height: 18px; flex: none; display: flex; align-items: center; justify-content: center; }
.qat button svg { width: 14px; height: 14px; }
.qat .letter { font: 700 14px/18px "Noto Sans", sans-serif; }
.drop { width: 10px; display: flex; justify-content: center; flex: none; }
.drop .caret { width: 5px; }
.sep { width: 1px; height: 14px; margin: 0 3px 0 2px; background: #aaa; flex: none; }
.more { width: 14px; align-self: stretch; display: flex; align-items: center; justify-content: center; border-left: 1px solid #999; border-right: 1px solid #999; }
h1 { flex: 1; display: flex; padding-left: 48px; gap: 12px; line-height: 19px; white-space: nowrap; color: #222; }
.info .nudge { width: 11px; }
.info .nudge svg { width: 4px; height: 6px; }
.info input { width: 153px; height: 18px; padding: 0 2px; border: 1px solid #555; border-width: 1px 0 1px 1px; font-size: 9px; font-style: italic; background: #fff; }
.info input::placeholder { color: #666; opacity: 1; }
.info svg { width: 14px; height: 14px; }
.info svg.caret { width: 5px; height: 4px; }
.info .signin { width: auto; gap: 4px; padding: 0 2px 0 3px; color: #222; }
.info .help { width: 14px; height: 14px; margin: 0 5px; border: 1px solid #556; border-radius: 50%; color: #2a3ea0; font-weight: 700; line-height: 10px; background: #fff; }
.winbtns { display: flex; padding: 0 3px 0 20px; }
.winbtns button { width: 38px; }
.winbtns svg { width: 10px; height: 10px; }

/* ribbon tabs */
.tabs { height: 15px; flex: none; display: flex; padding-left: 38px; background: #9a9c9a; }
.tabs button { padding: 0 7px; line-height: 15px; color: #2d2d2d; }
.tabs .on { background: #f2f4f3; border-radius: 2px 2px 0 0; }
.tabs .collapse { padding: 0 18px; display: flex; align-items: center; }

/* ribbon */
.ribbon { height: 80px; flex: none; display: flex; background: linear-gradient(#e2e4e0, #c9cbc7 45%, #9c9c9f); }
.group { display: flex; flex-direction: column; background: #fafbfa; border-right: 2px solid #dcdedd; }
.group h2 { height: 15px; display: flex; align-items: center; justify-content: center; gap: 6px; background: #f1f3f2; border-top: 1px solid #e2e4e3; }
.tools { flex: 1; display: flex; padding-top: 5px; }
.tool { position: relative; display: flex; flex-direction: column; align-items: center; line-height: 13px; color: #444; }
.tool > svg { width: 26px; height: 26px; margin-bottom: 4px; }
.tool > svg.caret { width: 6px; height: 4px; margin: 1px 0 0; }
.tool > svg.side { position: absolute; right: 2px; top: 41px; width: 4px; }
.tool.off { color: #b5b6b5; }
.tool.off > svg { opacity: .7; }
.g-select { width: 55px; }
.g-select .tools { padding: 3px 1px 2px 2px; }
.g-select .active { flex: 1; padding-top: 2px; background: linear-gradient(#bcd8f3, #a3c9ee); border: 1px solid #4a7ebc; }
.g-link { width: 297px; }
.g-link .tool { width: 33px; }
.g-link .tool:nth-child(4) { width: 54px; }
.g-link .tool:nth-child(5) { width: 43px; }
.g-link .tool:nth-child(6) { width: 48px; }
.g-link .tool:nth-child(7) { width: 49px; }
.g-import { width: 298px; }
.g-import .tool { width: 42px; }
.g-import .tool:nth-child(3) { width: 60px; }
.g-import .tool:nth-child(4) { width: 66px; }
.g-import .tool:nth-child(5) { width: 86px; }
.g-load { width: 124px; border: 0; }
.g-load .tool { width: 54px; }
.g-load .tool:last-child { width: 68px; }
.cad { font: 700 9px "Noto Sans", sans-serif; fill: #4b4d58; text-anchor: middle; }
.options { height: 23px; flex: none; background: #dcdedd; }

/* workspace */
.workspace { flex: 1; min-height: 0; display: flex; }
.props { width: 258px; margin-right: 4px; display: flex; flex-direction: column; background: #eceeed; flex: none; }
.props > header, .browser header { height: 19px; flex: none; display: flex; justify-content: space-between; align-items: center; padding: 0 3px 0 2px; background: #b9c8d9; border-bottom: 1px solid #66788c; color: #223; }
.props > header button, .browser header button { font-weight: 700; color: #112; }
.type { height: 60px; flex: none; display: flex; align-items: center; padding: 2px 2px 2px 3px; background: linear-gradient(#fdfefd, #eff1f2); }
.thumb { width: 54px; height: 55px; margin-right: 5px; display: flex; align-items: center; justify-content: center; border: 1px solid #ccc; background: #f7f8f8; }
.type span { flex: 1; }
.filter { height: 19px; flex: none; display: flex; }
.filter select { width: 169px; padding: 0 3px; border: 1px solid #b5b7b6; background: url("data:image/svg+xml,%3Csvg xmlns='http://www.w3.org/2000/svg' width='8' height='6'%3E%3Cpath d='M1 1l3 3 3-3' fill='none' stroke='%23777'/%3E%3C/svg%3E") right 2px center no-repeat #dddfde; }
.filter button { flex: 1; display: flex; align-items: center; justify-content: center; gap: 3px; color: #222; }
.grid { flex: 1; min-height: 0; display: flex; background: #fbfdfb; }
.rows { flex: 1; min-width: 0; }
table { width: 100%; border-collapse: separate; border-spacing: 0; table-layout: fixed; border-left: 1px solid #aaa; font-family: Roboto, "Noto Sans", sans-serif; }
tr { height: 16px; }
th, td { height: 16px; padding: 0 0 0 1px; line-height: 15px; text-align: left; font-weight: 400; white-space: nowrap; border-bottom: 1px dashed #b4b6b5; }
th { width: 121px; padding-left: 6px; border-right: 1px dashed #b4b6b5; }
.head th { padding-left: 1px; background: #d5d7d5; border: 0; }
.dim { color: #858685; }
.head svg { float: right; width: 6px; height: 8px; margin: 2px 3px 0 0; }
.b button { display: block; width: 100%; height: 15px; line-height: 13px; background: #dcdedd; border: 1px solid #999b9a; }
td input { display: block; appearance: none; width: 9px; height: 9px; margin: 0 0 0 1px; border: 1px solid #777; background: #fff; font: 8px/7px "DejaVu Sans", sans-serif; }
td input:disabled { border-color: #ccc; }
td input:checked::before { content: "✓"; }
.vbar { width: 15px; flex: none; display: flex; flex-direction: column; align-items: center; background: #eef0ef; }
.vbar svg { width: 8px; height: 6px; margin: 4px 0; }
.vbar i { flex: 1; width: 13px; margin: 26px 0 0; background: #c6c8c7; }
.props footer { height: 21px; flex: none; display: flex; justify-content: space-between; align-items: center; padding: 0 2px; }
.props footer a { color: #2f6fae; }
.props footer button { width: 57px; height: 17px; background: #c8cac9; color: #8a8b8a; }

.view { width: 768px; flex: none; display: flex; flex-direction: column; border: 1px solid #8a8c8b; border-top-width: 2px; border-bottom: 0; background: #eceeed; }
.sheetrow { flex: 1; min-height: 0; display: flex; }
.sheet { flex: 1; height: 100%; background: #fafcfa; overflow: hidden; }
.thin { stroke: #4a4a4a; stroke-width: 1; fill: none; }
.thick { stroke: #000; stroke-width: 1.5; }
.gray { stroke: #999; stroke-width: 1.5; }
.box path { stroke: #444; stroke-width: 1; }
.dimline { stroke: #888; fill: none; }
.num, .cell, .desc { font: 9px "Liberation Sans Narrow", "Roboto Condensed", Roboto, sans-serif; fill: #333; }
.num, .cell { text-anchor: middle; }
.big, .desc { font-size: 10px; }
.sheetbar { width: 18px; display: flex; flex-direction: column; justify-content: flex-end; align-items: center; padding: 0 5px 4px 0; background: #eef0ef; }
.sheetbar svg { width: 8px; height: 6px; }
.hbar { height: 15px; flex: none; display: flex; align-items: center; gap: 9px; padding: 0 4px 0 2px; }
.track { flex: 1; display: flex; height: 12px; }
.track i { width: 14px; margin-left: 331px; background: #c9cbca; }
.browser { flex: 1; background: #fafcfa; border-bottom: 1px solid #ccc; }
.browser header { justify-content: flex-end; }

/* status bar */
.status { height: 17px; flex: none; display: flex; align-items: center; background: linear-gradient(#e2e4e2, #c0c2c0); border-top: 1px solid #aaa; white-space: nowrap; line-height: 16px; }
.status p { width: 504px; overflow: hidden; color: #222; }
.sets { display: flex; align-items: center; gap: 5px; flex: 1; }
.sets select { width: 135px; height: 16px; border: 0; padding: 0 2px; color: #8a8b8a; background: url("data:image/svg+xml,%3Csvg xmlns='http://www.w3.org/2000/svg' width='8' height='6'%3E%3Cpath d='M1 1l3 3 3-3' fill='none' stroke='%23999'/%3E%3C/svg%3E") right 2px center no-repeat #fafbfa; }
.sets .model { width: 103px; }
.sets span { margin-right: 8px; }
.picks { display: flex; align-items: center; gap: 5px; width: 154px; }
.picks svg { width: 12px; height: 12px; }

/* taskbar */
.taskbar { height: 33px; flex: none; display: flex; background: #030408; color: #f2f2f2; }
.taskbar > button { width: 41px; display: flex; align-items: center; justify-content: center; position: relative; }
.taskbar > button svg { width: 15px; height: 15px; }
.taskbar > button svg.wide { width: 19px; height: 18px; }
.open::after { content: ""; position: absolute; left: 4px; right: 4px; bottom: 0; height: 3px; background: #76aee8; }
.current { background: #3b3e42; }
.current::after { left: 0; right: 0; }
.tray { flex: 1; display: flex; justify-content: flex-end; align-items: center; gap: 6px; padding-right: 3px; }
.tray svg { width: 14px; height: 14px; }
.lang { margin: 0 2px; }
time { width: 54px; text-align: center; line-height: 15px; }
.tray .bell { width: 16px; height: 16px; margin: 0 16px 0 5px; }

/* Dynamo window */
.dynamo {
  position: absolute; left: 569px; top: 103px; width: 654px; height: 493px;
  display: flex; flex-direction: column; background: #2e2f2c; color: #b9bab8;
  box-shadow: 0 1px 5px rgba(0, 0, 0, .55);
}
.d-title { height: 25px; flex: none; display: flex; align-items: stretch; padding: 0 0 0 5px; background: #fbfcfb; color: #8f908f; line-height: 25px; }
.d-title > svg { margin: 6px 4px 0 0; }
.d-title span { flex: 1; }
.d-title button { width: 39px; }
.d-title button svg { width: 10px; height: 10px; display: block; margin: auto; }
.d-menu { height: 22px; flex: none; display: flex; gap: 23px; padding-left: 13px; }
.d-menu .alert { width: 13px; height: 13px; margin-top: 4px; border-radius: 50%; background: #ddd; color: #222; font-weight: 700; line-height: 13px; }
.d-tools { height: 26px; flex: none; display: flex; align-items: center; gap: 20px; padding: 0 14px 0 12px; }
.d-tools button { display: flex; }
.d-tools svg { width: 14px; height: 14px; }
.d-tools .cloud { margin-left: auto; }
.d-tools .cloud svg { width: 24px; height: 16px; }
.d-tools .shot { margin-left: -6px; }
.d-tools .shot svg { width: 18px; }
.d-body { flex: 1; min-height: 0; display: flex; }
.lib { width: 172px; flex: none; display: flex; flex-direction: column; }
.lib header { height: 17px; display: flex; align-items: center; justify-content: space-between; padding: 0 5px 0 13px; background: #1b1c19; font-weight: 500; }
.search { height: 25px; margin: 3px 7px 3px 3px; display: flex; align-items: center; justify-content: center; gap: 7px; border-radius: 6px; background: #f1f2f2; }
.search input { width: 36px; padding: 0; border: 0; background: none; font-size: 12px; line-height: 20px; }
.search input::placeholder { color: #777; opacity: 1; }
.cats { height: 274px; flex: none; display: grid; grid-template-rows: repeat(10, 1fr); background: #232421; border-right: 2px solid #2a2b28; }
.cats button { display: flex; align-items: center; text-align: left; color: #a4a5a3; border-bottom: 1px solid #2d2e2b; }
.cats button::before { content: ""; width: 0; margin: 0 10px 0 8px; border: 3px solid transparent; border-left: 5px solid #777; border-right: 0; }
.add { flex: 1; display: flex; align-items: center; justify-content: center; padding: 0 4px 5px 0; }
.add button { width: 84px; height: 19px; padding: 0; line-height: 16px; border: 1px solid #565755; color: #8e8f8d; }
.add .caret { width: 5px; margin: 0 0 3px 9px; }
.work { flex: 1; min-width: 0; display: flex; flex-direction: column; }
.work header { height: 17px; flex: none; display: flex; align-items: center; padding-right: 3px; background: #1d1e1b; }
.file { padding-left: 8px; line-height: 17px; font-weight: 500; color: #cfd0ce; background: #2e2f2c; white-space: nowrap; }
.work header button { width: 16px; line-height: 17px; background: #2e2f2c; color: #777; }
.work header i { flex: 1; }

/* graph canvas */
.canvas { flex: 1; position: relative; overflow: hidden; background: #f4f5f3; color: #333; }
.layer { position: absolute; inset: 0; width: 100%; height: 100%; }
.wires { fill: none; stroke: #3a3b39; stroke-width: 2; }
.wires g { fill: #3a3b39; stroke: none; }
.note { position: absolute; line-height: 13px; }
.green { left: 27px; top: 0; width: 137px; height: 111px; background: rgba(200, 220, 135, .7); }
.blue { left: 53px; top: 120px; width: 83px; height: 132px; padding: 1px 4px; background: rgba(118, 198, 252, .78); }
.node { position: absolute; height: 41px; display: flex; flex-direction: column; border: 1px solid #8a8a86; background: #dedbd6; white-space: nowrap; }
.node h5 { height: 20px; flex: none; display: flex; justify-content: center; margin: -1px -1px 0; background: #585752; color: #fff; font-weight: 700; font-size: 9px; line-height: 20px; }
.node > div { flex: 1; display: flex; }
.node span { flex: 1; padding-left: 3px; font-size: 9px; line-height: 18px; }
.node b { width: 16px; border-left: 1px solid #c9c6c1; background: #e9e7e3; font-weight: 400; text-align: center; line-height: 20px; color: #666; }
.n-type { left: 92px; top: 12px; width: 64px; }
.n-param { left: 34px; top: 63px; width: 124px; }
.n-dash { left: 62px; top: 158px; width: 47px; }
.n-sep { left: 62px; top: 203px; width: 67px; }
.n-retry { left: 53px; top: 263px; width: 103px; }
.n-retry > div { background: #c3c0b9; }
.node .radios { display: flex; gap: 10px; padding-left: 7px; }
.radios label { display: flex; align-items: center; gap: 2px; }
.radios input { appearance: none; width: 10px; height: 10px; margin: 0; border: 1px solid #777; border-radius: 50%; background: #fff; }
.radios input:checked { background: radial-gradient(circle, #111 0 2px, #fff 3px); }
.n-py { left: 246px; top: 74px; width: 95px; height: 140px; background: #c5c1b8; }
.n-py > div { align-items: flex-start; gap: 1px; }
.n-py ul { width: 31px; display: grid; gap: 1px; }
.n-py li { height: 20px; padding-left: 3px; line-height: 19px; background: #e2e0dc; color: #666; }
.n-py button { width: 16px; height: 17px; background: #dddad5; line-height: 15px; }
.n-py .out { height: 20px; padding-left: 4px; background: #dcd9d4; font-size: 10px; line-height: 20px; color: #666; }
.zoomer { position: absolute; right: 6px; top: 38px; display: grid; gap: 7px; }
.zoomer div { display: grid; background: #fbfbfa; box-shadow: 0 1px 2px rgba(0, 0, 0, .3); }
.zoomer button { width: 20px; height: 20px; color: #555; }
.zoomer svg { width: 12px; height: 12px; display: block; margin: auto; }

.d-foot { height: 40px; flex: none; display: flex; align-items: center; padding: 0 2px 0 3px; gap: 1px; background: linear-gradient(#1d1e1b, #0c0d0b); }
.mode { position: relative; width: 103px; height: 33px; }
.mode select { width: 100%; height: 100%; padding: 0 7px; border: 1px solid #353633; background: #232421; color: #c4c5c3; font-size: 11px; }
.mode .caret { position: absolute; right: 10px; top: 15px; }
.d-foot button { width: 82px; height: 33px; background: #30312e; color: #c4c5c3; font-size: 11px; }
.d-foot p { flex: 1; padding-left: 84px; font-style: italic; color: #8b8c8a; }
.d-foot > svg { align-self: flex-end; margin-bottom: 2px; }
```
